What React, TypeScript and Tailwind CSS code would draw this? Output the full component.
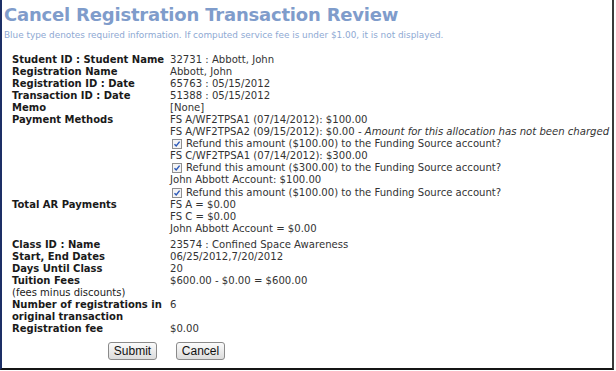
import React from "react";

const check = (
  <span className="inline-flex items-center justify-center w-[10px] h-[10px] border border-[#8f8f8f] bg-[#f4f4f4] mr-[4px] ml-[2px] align-[-1px]">
    <svg width="8" height="8" viewBox="0 0 8 8">
      <path d="M1.5 4.2 L3.2 6 L6.6 1.6" fill="none" stroke="#2b58b8" strokeWidth="1.4" />
    </svg>
  </span>
);

type Row = { label: React.ReactNode; lines: React.ReactNode[]; gapTop?: boolean };

const rows: Row[] = [
  { label: "Student ID : Student Name", lines: ["32731 : Abbott, John"] },
  { label: "Registration Name", lines: ["Abbott, John"] },
  { label: "Registration ID : Date", lines: ["65763 : 05/15/2012"] },
  { label: "Transaction ID : Date", lines: ["51388 : 05/15/2012"] },
  { label: "Memo", lines: ["[None]"] },
  {
    label: "Payment Methods",
    lines: [
      "FS A/WF2TPSA1 (07/14/2012): $100.00",
      <>
        FS A/WF2TPSA2 (09/15/2012): $0.00 - <i>Amount for this allocation has not been charged</i>
      </>,
      <>{check}Refund this amount ($100.00) to the Funding Source account?</>,
      "FS C/WF2TPSA1 (07/14/2012): $300.00",
      <>{check}Refund this amount ($300.00) to the Funding Source account?</>,
      "John Abbott Account: $100.00",
      <>{check}Refund this amount ($100.00) to the Funding Source account?</>,
    ],
  },
  { label: "Total AR Payments", lines: ["FS A = $0.00", "FS C = $0.00", "John Abbott Account = $0.00"] },
  { label: "Class ID : Name", lines: ["23574 : Confined Space Awareness"], gapTop: true },
  { label: "Start, End Dates", lines: ["06/25/2012,7/20/2012"] },
  { label: "Days Until Class", lines: ["20"] },
  {
    label: (
      <>
        Tuition Fees
        <br />
        <span className="font-normal">(fees minus discounts)</span>
      </>
    ),
    lines: ["$600.00 - $0.00 = $600.00"],
  },
  {
    label: (
      <>
        Number of registrations in
        <br />
        original transaction
      </>
    ),
    lines: ["6"],
  },
  { label: "Registration fee", lines: ["$0.00"] },
];

export default function App() {
  return (
    <div className="w-[616px] h-[371px] bg-white overflow-hidden">
      <div className="w-[614px] h-[370px] border-l-2 border-b-2 border-r-2 border-l-[#1d2f66] border-b-[#151515] border-r-[#3a3a3a] pl-[2px] pt-[3px] font-['DejaVu_Sans',sans-serif] text-[#222]">
        <h1 className="text-[18px] leading-[24px] font-bold text-[#7f9ccb] tracking-[-0.2px]">
          Cancel Registration Transaction Review
        </h1>
        <p className="text-[8.9px] leading-[12px] mt-[2px] text-[#8ea9d3]">
          Blue type denotes required information. If computed service fee is under $1.00, it is not displayed.
        </p>

        <div className="grid grid-cols-[158px_1fr] pl-[8px] mt-[13px] text-[10px] leading-[12.05px]">
          {rows.map((r, i) => (
            <React.Fragment key={i}>
              <div className={`font-bold text-[#1a1a1a] ${r.gapTop ? "mt-[4px]" : ""}`}>{r.label}</div>
              <div className={`text-[10.1px] text-[#333] whitespace-nowrap ${r.gapTop ? "mt-[4px]" : ""}`}>
                {r.lines.map((l, j) => (
                  <div key={j}>{l}</div>
                ))}
              </div>
            </React.Fragment>
          ))}
        </div>

        <div className="flex gap-[19px] pl-[104px] mt-[7px] font-['Liberation_Sans',Arial,sans-serif]">
          <button className="w-[49px] h-[18px] text-[12px] leading-[16px] text-[#111] border border-[#8a8a8a] rounded-[3px] bg-gradient-to-b from-[#fbfbfb] to-[#dcdcdc]">
            Submit
          </button>
          <button className="w-[49px] h-[18px] text-[12px] leading-[16px] text-[#111] border border-[#8a8a8a] rounded-[3px] bg-gradient-to-b from-[#fbfbfb] to-[#dcdcdc]">
            Cancel
          </button>
        </div>
      </div>
    </div>
  );
}
